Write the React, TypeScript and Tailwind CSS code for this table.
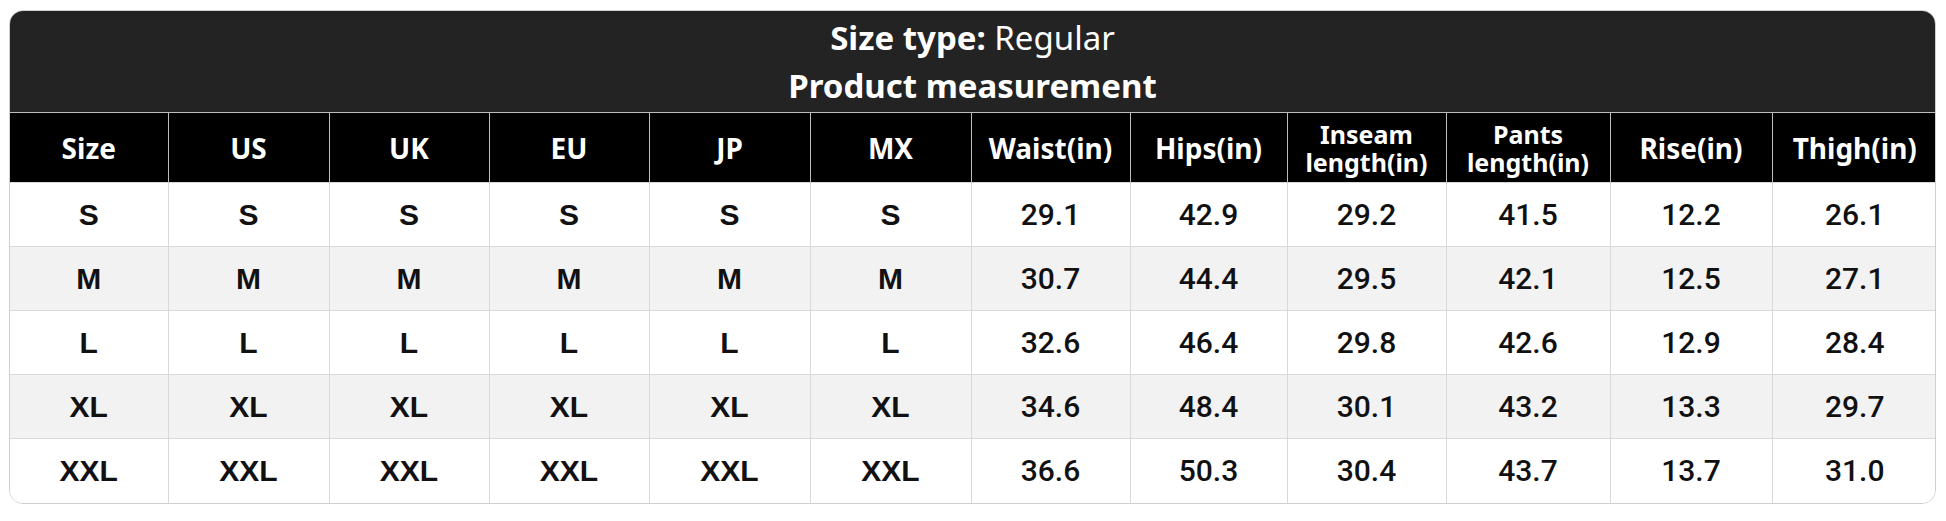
import React from 'react';

const headers = [
  'Size',
  'US',
  'UK',
  'EU',
  'JP',
  'MX',
  'Waist(in)',
  'Hips(in)',
  'Inseam\nlength(in)',
  'Pants\nlength(in)',
  'Rise(in)',
  'Thigh(in)',
];

// column widths measured off the chart
const colWidths = [158, 161, 160, 160, 161, 161, 159, 157, 159, 164, 162, 165];

const rows = [
  ['S', 'S', 'S', 'S', 'S', 'S', '29.1', '42.9', '29.2', '41.5', '12.2', '26.1'],
  ['M', 'M', 'M', 'M', 'M', 'M', '30.7', '44.4', '29.5', '42.1', '12.5', '27.1'],
  ['L', 'L', 'L', 'L', 'L', 'L', '32.6', '46.4', '29.8', '42.6', '12.9', '28.4'],
  ['XL', 'XL', 'XL', 'XL', 'XL', 'XL', '34.6', '48.4', '30.1', '43.2', '13.3', '29.7'],
  ['XXL', 'XXL', 'XXL', 'XXL', 'XXL', 'XXL', '36.6', '50.3', '30.4', '43.7', '13.7', '31.0'],
];

export default function App() {
  return (
    <div className="min-h-[521px] bg-white pt-[10px] pl-[9px] pr-[10px]">
      <div className="overflow-hidden rounded-[14px] border border-[#cfcfcf]">
        {/* Title */}
        <div className="flex h-[101px] flex-col items-center justify-center bg-[#232323] text-[33px] leading-[48px] text-white [font-family:'Noto_Sans',sans-serif]">
          <div>
            <span className="font-bold">Size type:</span> Regular
          </div>
          <div className="font-bold">Product measurement</div>
        </div>

        <table className="w-full table-fixed border-collapse">
          <colgroup>
            {colWidths.map((w, i) => (
              <col key={i} style={{ width: w }} />
            ))}
          </colgroup>
          <thead>
            <tr className="h-[70px] border-t border-[#bdbdbd] bg-black">
              {headers.map((h) => {
                const twoLines = h.includes('\n');
                return (
                  <th
                    key={h}
                    className={`border-l border-[#bdbdbd] px-1 text-center font-bold whitespace-pre-line text-white first:border-l-0 [font-family:'Noto_Sans',sans-serif] ${
                      twoLines ? 'text-[25px] leading-[28px]' : 'text-[28px] leading-[34px]'
                    }`}
                  >
                    {h}
                  </th>
                );
              })}
            </tr>
          </thead>
          <tbody>
            {rows.map((row, i) => (
              <tr key={i} className={`h-[64px] ${i % 2 === 1 ? 'bg-[#f2f2f2]' : 'bg-white'}`}>
                {row.map((cell, j) => (
                  <td
                    key={j}
                    className={`border-t border-l border-[#d9d9d9] text-center text-[30px] text-[#111] first:border-l-0 ${
                      j < 6
                        ? "font-bold [font-family:'Liberation_Sans',Arial,sans-serif]"
                        : "font-medium [font-family:Roboto,sans-serif]"
                    }`}
                  >
                    {cell}
                  </td>
                ))}
              </tr>
            ))}
          </tbody>
        </table>
      </div>
    </div>
  );
}
